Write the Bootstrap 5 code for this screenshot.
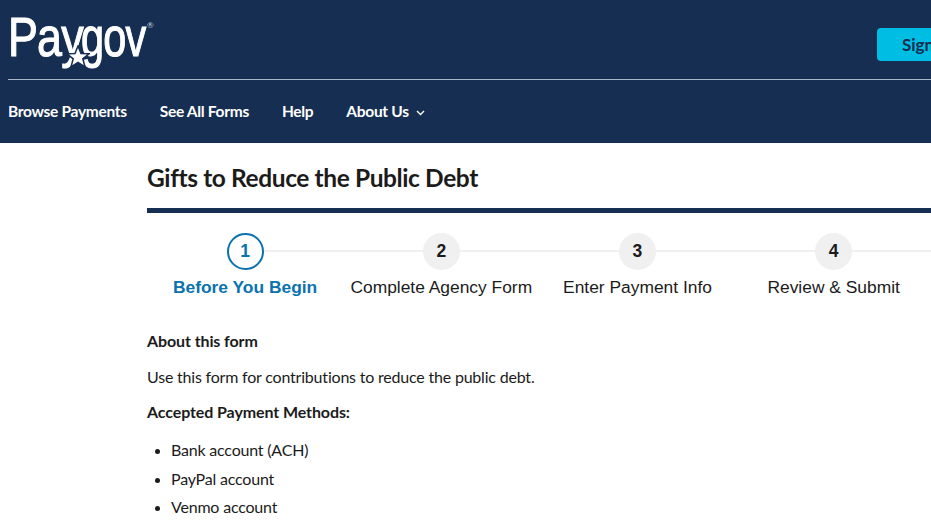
<!DOCTYPE html>
<html lang="en">
<head>
<meta charset="utf-8">
<title>Pay.gov</title>
<link href="https://cdn.jsdelivr.net/npm/bootstrap@5.3.0/dist/css/bootstrap.min.css" rel="stylesheet">
<style>
html,body{overflow:hidden;height:523px}
body{font-family:Lato,"Noto Sans",sans-serif;color:#1b1b1b;font-size:16px}
.page-wrap{width:1025px}
.site-head{background:#162e51;height:143px;padding:0 8px}
.head-top{height:80px;border-bottom:1px solid #a9b6c9}
.brand{position:relative;display:block;width:146px;height:70px;color:#fff;text-decoration:none}
.brand-txt{position:absolute;top:5px;font:400 56px/64px "Liberation Sans",sans-serif;-webkit-text-stroke:1.1px #fff;transform-origin:left top;white-space:nowrap}
.brand-pay{left:0;letter-spacing:-1px;transform:scaleX(.8)}
.brand-gov{left:73px;letter-spacing:-1px;transform:scaleX(.74)}
.brand-star{position:absolute;left:58px;top:45px}
.brand-reg{position:absolute;left:139px;top:21px;font-size:8px;color:#c9d3e0;line-height:1}
.sign-btn{background:#00bde3;color:#162e51;font-weight:700;font-size:17px;border:0;border-radius:4px;width:140px;height:33px;padding:0 0 0 25px;text-align:left;margin-top:28px}
.main-nav{height:63px;gap:33px}
.main-nav a{color:#fff;font-weight:700;font-size:15.5px;letter-spacing:-.3px;text-decoration:none}
.caret{margin-left:7px;vertical-align:1px}
.content-area{padding:0 0 0 147px}
.page-title{font-size:24.5px;font-weight:700;line-height:30px;letter-spacing:-.4px;margin:20px 0 0;color:#1b1b1b}
.title-rule{height:5px;background:#162e51;margin:15px 0 0}
.stepper{margin-top:20px;width:982px}
.step{width:196.2px;position:relative;text-align:center;font:17.4px/22px "Liberation Sans",sans-serif;color:#1b1b1b}
.step-dot{position:relative;z-index:1;width:37px;height:37px;border-radius:50%;background:#f0f0f0;font-weight:700;font-size:17.5px;line-height:37px;margin:0 auto 6px}
.step::before{content:"";position:absolute;top:17px;left:50%;width:100%;height:2px;background:#f0f0f0}
.step.on{color:#0b72ae;font-weight:700}
.step.on .step-dot{background:#fff;border:2px solid #0b72ae;line-height:33px}
.about{margin-top:31px;font-size:16px;line-height:24px;letter-spacing:-.2px}
.about p{margin:0 0 11.5px}
.about p.fw-bold{letter-spacing:-.1px}
.about ul{margin:14px 0 0;padding-left:24px}
.about li{margin-bottom:4.5px}
.about li::marker{font-size:14px}
</style>
</head>
<body>
<div class="page-wrap">
  <header class="site-head">
    <div class="head-top d-flex justify-content-between align-items-start">
      <a class="brand" href="#">
        <span class="brand-txt brand-pay">Pay</span>
        <span class="brand-txt brand-gov">gov</span>
        <svg class="brand-star" width="24" height="23" viewBox="0 0 24 23"><polygon fill="#fff" stroke="#162e51" stroke-width="1.500" points="12,1 15,8.600 23,8.800 16.800,13.800 19,22 12,17.400 5,22 7.200,13.800 1,8.800 9,8.600"/></svg>
        <span class="brand-reg">®</span>
      </a>
      <button class="sign-btn" type="button">Sign In</button>
    </div>
    <nav class="main-nav d-flex align-items-center">
      <a href="#">Browse Payments</a>
      <a href="#">See All Forms</a>
      <a href="#">Help</a>
      <a href="#">About Us<svg class="caret" width="9" height="6" viewBox="0 0 9 6"><path d="M1 1l3.500 3.500L8 1" fill="none" stroke="#fff" stroke-width="1.400"/></svg></a>
    </nav>
  </header>
  <main class="content-area">
    <h1 class="page-title">Gifts to Reduce the Public Debt</h1>
    <div class="title-rule"></div>
    <div class="stepper d-flex">
      <div class="step on"><div class="step-dot">1</div>Before You Begin</div>
      <div class="step"><div class="step-dot">2</div>Complete Agency Form</div>
      <div class="step"><div class="step-dot">3</div>Enter Payment Info</div>
      <div class="step"><div class="step-dot">4</div>Review &amp; Submit</div>
    </div>
    <section class="about">
      <p class="fw-bold">About this form</p>
      <p>Use this form for contributions to reduce the public debt.</p>
      <p class="fw-bold">Accepted Payment Methods:</p>
      <ul>
        <li>Bank account (ACH)</li>
        <li>PayPal account</li>
        <li>Venmo account</li>
      </ul>
    </section>
  </main>
</div>
<script src="https://cdn.jsdelivr.net/npm/bootstrap@5.3.0/dist/js/bootstrap.bundle.min.js"></script>
</body>
</html>
